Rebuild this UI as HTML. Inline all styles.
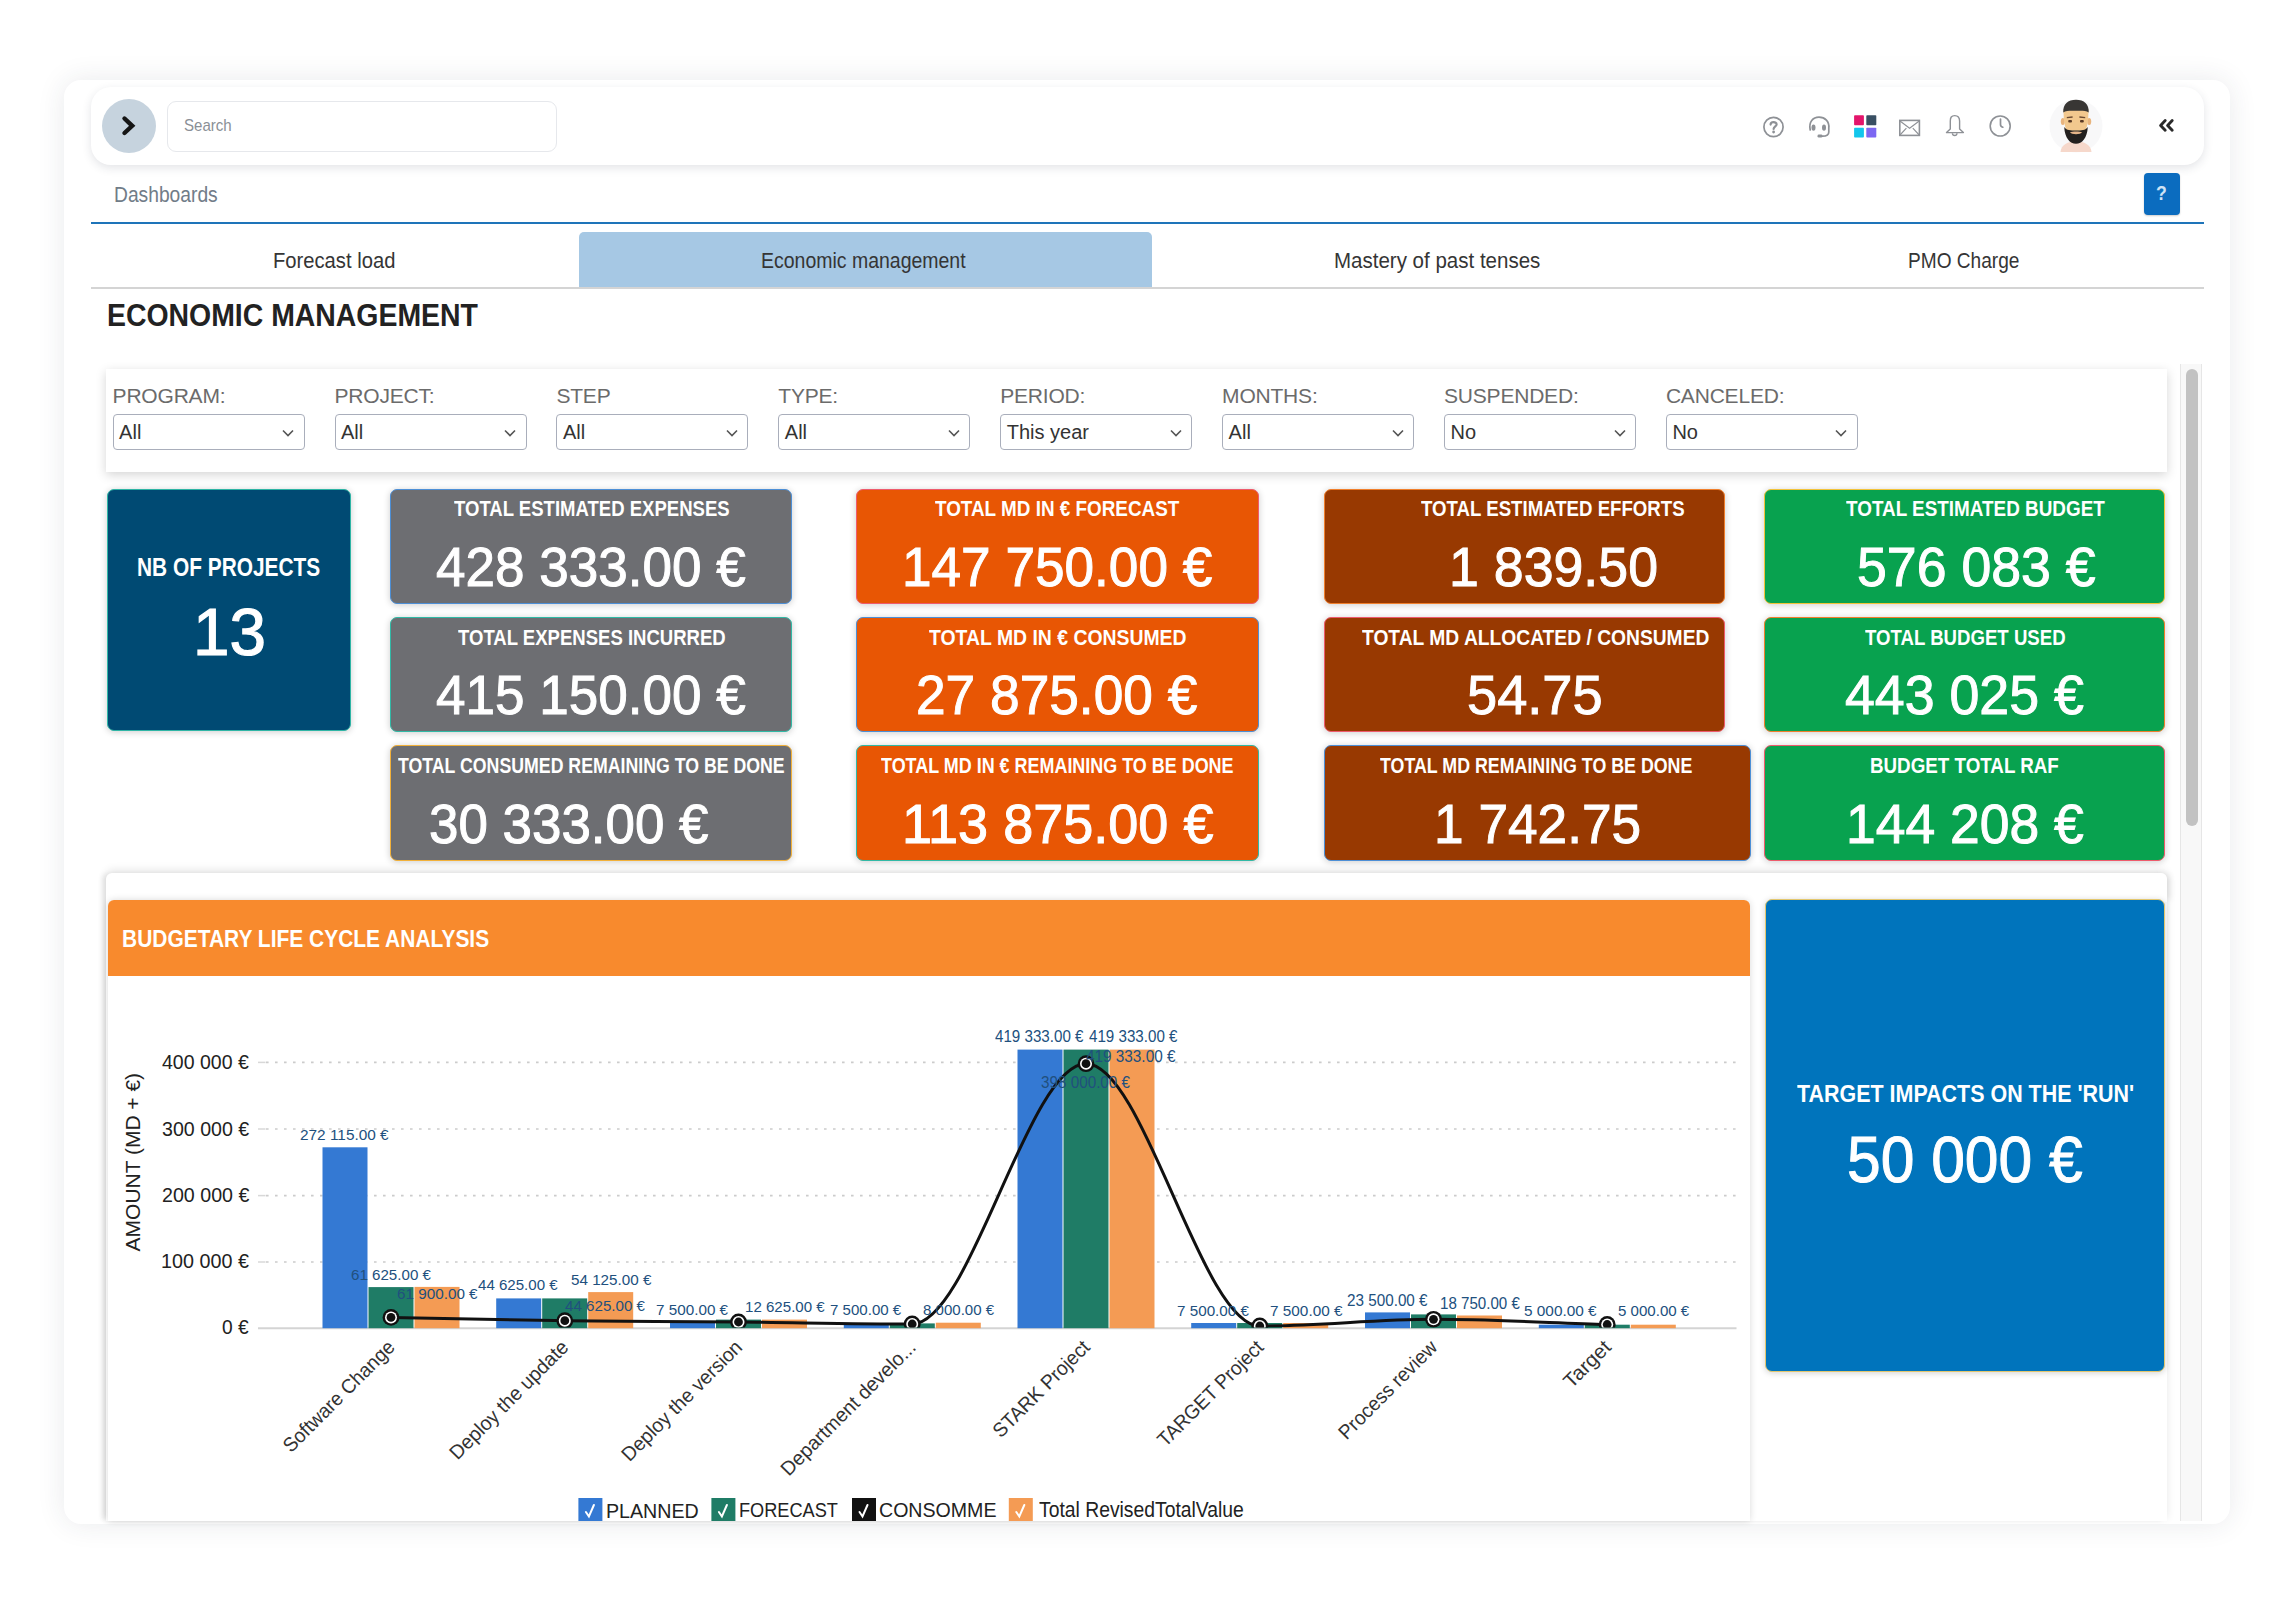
<!DOCTYPE html>
<html><head><meta charset="utf-8"><title>Economic management</title>
<style>
html,body{margin:0;padding:0;background:#fff;width:2293px;height:1604px;overflow:hidden;}
body{position:relative;font-family:"Liberation Sans",sans-serif;}
.b{position:absolute;box-sizing:border-box;}
.t{position:absolute;white-space:nowrap;transform-origin:0 0;font-family:"Liberation Sans",sans-serif;}
svg{position:absolute;overflow:visible;}
</style></head><body>
<div class="b " style="left:64.0px;top:80.0px;width:2166.0px;height:1444.0px;background:#fff;border-radius:17px;box-shadow:0 0 28px rgba(40,50,70,0.10);"></div>
<div class="b " style="left:91.0px;top:87.0px;width:2113.0px;height:78.0px;background:#fff;border-radius:20px;box-shadow:0 3px 10px rgba(40,50,70,0.13);"></div>
<div class="b " style="left:101.5px;top:99.0px;width:54.0px;height:54.0px;background:#c6d3de;border-radius:50%;"></div>
<svg style="left:118px;top:112px" width="22" height="28" viewBox="0 0 22 28"><path d="M6.5 6.5 L14.2 13.8 L6.5 21" fill="none" stroke="#151515" stroke-width="4.4" stroke-linecap="round" stroke-linejoin="miter"/></svg>
<div class="b " style="left:167.0px;top:100.5px;width:389.5px;height:51.0px;background:#fff;border:1px solid #e6e8ec;border-radius:9px;"></div>
<div class="t" style="left:184.32px;top:117.99px;font-size:16.55px;line-height:16.55px;color:#8a8f96;font-weight:normal;transform:scaleX(0.9097);">Search</div>
<svg style="left:1762px;top:115px" width="24" height="24" viewBox="0 0 24 24"><circle cx="11.5" cy="12" r="9.6" fill="none" stroke="#8e9196" stroke-width="1.7"/><path d="M8.6 9.6 C8.6 6.4 14.6 6.4 14.6 9.4 C14.6 11.2 11.6 11.6 11.6 14" fill="none" stroke="#8e9196" stroke-width="2.2" stroke-linecap="round"/><circle cx="11.6" cy="17" r="1.4" fill="#8e9196"/></svg>
<svg style="left:1807px;top:115px" width="25" height="24" viewBox="0 0 25 24"><path d="M3.2 15 C1.5 7 6 2.2 12 2.2 C18 2.2 22.5 6.5 21.8 13 L21.8 17 C21.8 20.5 19 21.2 15.5 21.2" fill="none" stroke="#8e9196" stroke-width="1.7" stroke-linecap="round"/><ellipse cx="6.5" cy="12.6" rx="2" ry="3.2" fill="#8e9196"/><ellipse cx="17" cy="12.6" rx="2" ry="3.2" fill="#8e9196"/><rect x="10.5" y="19.6" width="5" height="3" rx="1.4" fill="#8e9196"/></svg>
<svg style="left:1854px;top:115px" width="23" height="23" viewBox="0 0 23 23"><rect x="0.1" y="0.3" width="9.8" height="10" rx="0.8" fill="#e3156b"/><rect x="12.3" y="0.3" width="10" height="10" rx="0.8" fill="#394f63"/><rect x="0.1" y="12.8" width="9.8" height="9.8" rx="0.8" fill="#12c6ec"/><rect x="12.3" y="12.8" width="10" height="9.8" rx="0.8" fill="#7d67f2"/></svg>
<svg style="left:1898px;top:119px" width="23" height="18" viewBox="0 0 23 18"><rect x="1.8" y="1.4" width="19.6" height="15" fill="none" stroke="#8e9196" stroke-width="1.6"/><path d="M2 2 L11.6 9.2 L21.2 2 M2 16 L8.4 9.2 M21.2 16 L14.8 9.2" fill="none" stroke="#8e9196" stroke-width="1.1"/></svg>
<svg style="left:1944px;top:114px" width="21" height="24" viewBox="0 0 21 24"><path d="M10.7 1.6 C7.4 1.6 6.3 3.6 6.3 7 L6.3 15 L2.5 18.6 L19.4 18.6 L15.6 15 L15.6 7 C15.6 3.6 14 1.6 10.7 1.6 Z" fill="none" stroke="#8e9196" stroke-width="1.4" stroke-linejoin="round"/><path d="M8.4 19.2 C8.6 22.3 12.8 22.3 13 19.2" fill="none" stroke="#8e9196" stroke-width="1.4"/></svg>
<svg style="left:1988px;top:114px" width="24" height="24" viewBox="0 0 24 24"><circle cx="12.2" cy="12" r="10" fill="none" stroke="#8e9196" stroke-width="1.6"/><path d="M12.5 5 L12.5 10.5 Q12.5 12.6 14.8 13.2" fill="none" stroke="#8e9196" stroke-width="1.7" stroke-linecap="round"/></svg>
<svg style="left:2049px;top:98px" width="54" height="56" viewBox="0 0 54 56">
<circle cx="27" cy="28" r="26.5" fill="#f8f8f9"/>
<path d="M11.5 54 C12 46.5 19 43.5 27 43.5 C35 43.5 42 46.5 42.5 54 Z" fill="#f6d8cb"/>
<ellipse cx="13.8" cy="23.5" rx="2" ry="3.6" fill="#e8b47e"/><ellipse cx="40.2" cy="23.5" rx="2" ry="3.6" fill="#e8b47e"/>
<path d="M14.5 11.5 C14.5 30 18 39 27 39 C36 39 39.5 30 39.5 11.5 Z" fill="#f2c88e"/>
<path d="M14.3 14.5 C13.8 6 19 1.8 27 1.8 C35 1.8 40.2 6 39.7 14.5 C37 12.5 33 12.8 27 12.8 C21 12.8 17 12.5 14.3 14.5 Z" fill="#383634"/>
<path d="M15.2 29 C15.8 40 21 45.8 27 45.8 C33 45.8 38.2 40 38.8 29 C37 31.8 34 32.6 27 32.4 C20 32.6 17 31.8 15.2 29 Z" fill="#23201f"/>
<path d="M21 34.2 C23 33.2 31 33.2 33 34.2 C32 36.8 22 36.8 21 34.2 Z" fill="#e6b488"/>
<rect x="19.2" y="22" width="3.8" height="2.6" rx="1" fill="#5a3a26"/><rect x="31" y="22" width="3.8" height="2.6" rx="1" fill="#5a3a26"/>
<path d="M17.8 19.6 L23.6 19 M30.4 19 L36.2 19.6" stroke="#6b4a32" stroke-width="1.3"/>
</svg>
<svg style="left:2158px;top:119px" width="17" height="13" viewBox="0 0 17 13"><path d="M7.2 1.6 L2.6 6.4 L7.2 11.2 M14.2 1.6 L9.6 6.4 L14.2 11.2" fill="none" stroke="#2a2a2a" stroke-width="2.9" stroke-linecap="round" stroke-linejoin="round"/></svg>
<div class="t" style="left:113.96px;top:185.40px;font-size:21.38px;line-height:21.38px;color:#717c88;font-weight:normal;transform:scaleX(0.9000);">Dashboards</div>
<div class="b " style="left:2144.0px;top:173.0px;width:36.0px;height:41.5px;background:#0b6cbf;border-radius:4px;box-shadow:0 1px 2px rgba(0,0,0,.2);"></div>
<div class="t" style="left:2156.21px;top:183.07px;font-size:20.00px;line-height:20.00px;color:#cfe3f5;font-weight:bold;transform:scaleX(0.8824);">?</div>
<div class="b " style="left:91.0px;top:222.0px;width:2113.0px;height:2.0px;background:#1e74b9;"></div>
<div class="b " style="left:579.0px;top:232.0px;width:572.5px;height:55.5px;background:#a6c8e4;border-radius:5px 5px 0 0;"></div>
<div class="b " style="left:91.0px;top:287.0px;width:2113.0px;height:2.0px;background:#d4d4d4;"></div>
<div class="t" style="left:273.38px;top:249.81px;font-size:22.07px;line-height:22.07px;color:#353535;font-weight:normal;transform:scaleX(0.9154);">Forecast load</div>
<div class="t" style="left:761.44px;top:249.81px;font-size:22.07px;line-height:22.07px;color:#353535;font-weight:normal;transform:scaleX(0.8828);">Economic management</div>
<div class="t" style="left:1334.36px;top:249.81px;font-size:22.07px;line-height:22.07px;color:#353535;font-weight:normal;transform:scaleX(0.9295);">Mastery of past tenses</div>
<div class="t" style="left:1908.47px;top:249.81px;font-size:22.07px;line-height:22.07px;color:#353535;font-weight:normal;transform:scaleX(0.8650);">PMO Charge</div>
<div class="t" style="left:106.65px;top:300.43px;font-size:31.14px;line-height:31.14px;color:#222;font-weight:bold;transform:scaleX(0.9128);">ECONOMIC MANAGEMENT</div>
<div class="b " style="left:106.0px;top:369.0px;width:2060.5px;height:103.0px;background:#fff;box-shadow:0 3px 10px rgba(0,0,0,0.17);"></div>
<div class="t" style="left:112.6px;top:381px;font-size:21px;line-height:30px;color:#6b6b6b;letter-spacing:-0.2px">PROGRAM:</div>
<div class="b " style="left:112.6px;top:413.5px;width:192.0px;height:36.5px;background:#fff;border:1px solid #a9aebb;border-radius:4px;"></div>
<div class="t" style="left:119.1px;top:418px;font-size:20px;line-height:28px;color:#333">All</div>
<svg style="left:281.1px;top:428px" width="14" height="10" viewBox="0 0 14 10"><path d="M2 2.5 L7 7.5 L12 2.5" fill="none" stroke="#555" stroke-width="1.6"/></svg>
<div class="t" style="left:334.5px;top:381px;font-size:21px;line-height:30px;color:#6b6b6b;letter-spacing:-0.2px">PROJECT:</div>
<div class="b " style="left:334.5px;top:413.5px;width:192.0px;height:36.5px;background:#fff;border:1px solid #a9aebb;border-radius:4px;"></div>
<div class="t" style="left:341.0px;top:418px;font-size:20px;line-height:28px;color:#333">All</div>
<svg style="left:503.0px;top:428px" width="14" height="10" viewBox="0 0 14 10"><path d="M2 2.5 L7 7.5 L12 2.5" fill="none" stroke="#555" stroke-width="1.6"/></svg>
<div class="t" style="left:556.4px;top:381px;font-size:21px;line-height:30px;color:#6b6b6b;letter-spacing:-0.2px">STEP</div>
<div class="b " style="left:556.4px;top:413.5px;width:192.0px;height:36.5px;background:#fff;border:1px solid #a9aebb;border-radius:4px;"></div>
<div class="t" style="left:562.9px;top:418px;font-size:20px;line-height:28px;color:#333">All</div>
<svg style="left:724.9px;top:428px" width="14" height="10" viewBox="0 0 14 10"><path d="M2 2.5 L7 7.5 L12 2.5" fill="none" stroke="#555" stroke-width="1.6"/></svg>
<div class="t" style="left:778.3px;top:381px;font-size:21px;line-height:30px;color:#6b6b6b;letter-spacing:-0.2px">TYPE:</div>
<div class="b " style="left:778.3px;top:413.5px;width:192.0px;height:36.5px;background:#fff;border:1px solid #a9aebb;border-radius:4px;"></div>
<div class="t" style="left:784.8px;top:418px;font-size:20px;line-height:28px;color:#333">All</div>
<svg style="left:946.8px;top:428px" width="14" height="10" viewBox="0 0 14 10"><path d="M2 2.5 L7 7.5 L12 2.5" fill="none" stroke="#555" stroke-width="1.6"/></svg>
<div class="t" style="left:1000.2px;top:381px;font-size:21px;line-height:30px;color:#6b6b6b;letter-spacing:-0.2px">PERIOD:</div>
<div class="b " style="left:1000.2px;top:413.5px;width:192.0px;height:36.5px;background:#fff;border:1px solid #a9aebb;border-radius:4px;"></div>
<div class="t" style="left:1006.7px;top:418px;font-size:20px;line-height:28px;color:#333">This year</div>
<svg style="left:1168.7px;top:428px" width="14" height="10" viewBox="0 0 14 10"><path d="M2 2.5 L7 7.5 L12 2.5" fill="none" stroke="#555" stroke-width="1.6"/></svg>
<div class="t" style="left:1222.1px;top:381px;font-size:21px;line-height:30px;color:#6b6b6b;letter-spacing:-0.2px">MONTHS:</div>
<div class="b " style="left:1222.1px;top:413.5px;width:192.0px;height:36.5px;background:#fff;border:1px solid #a9aebb;border-radius:4px;"></div>
<div class="t" style="left:1228.6px;top:418px;font-size:20px;line-height:28px;color:#333">All</div>
<svg style="left:1390.6px;top:428px" width="14" height="10" viewBox="0 0 14 10"><path d="M2 2.5 L7 7.5 L12 2.5" fill="none" stroke="#555" stroke-width="1.6"/></svg>
<div class="t" style="left:1444.0px;top:381px;font-size:21px;line-height:30px;color:#6b6b6b;letter-spacing:-0.2px">SUSPENDED:</div>
<div class="b " style="left:1444.0px;top:413.5px;width:192.0px;height:36.5px;background:#fff;border:1px solid #a9aebb;border-radius:4px;"></div>
<div class="t" style="left:1450.5px;top:418px;font-size:20px;line-height:28px;color:#333">No</div>
<svg style="left:1612.5px;top:428px" width="14" height="10" viewBox="0 0 14 10"><path d="M2 2.5 L7 7.5 L12 2.5" fill="none" stroke="#555" stroke-width="1.6"/></svg>
<div class="t" style="left:1665.9px;top:381px;font-size:21px;line-height:30px;color:#6b6b6b;letter-spacing:-0.2px">CANCELED:</div>
<div class="b " style="left:1665.9px;top:413.5px;width:192.0px;height:36.5px;background:#fff;border:1px solid #a9aebb;border-radius:4px;"></div>
<div class="t" style="left:1672.4px;top:418px;font-size:20px;line-height:28px;color:#333">No</div>
<svg style="left:1834.4px;top:428px" width="14" height="10" viewBox="0 0 14 10"><path d="M2 2.5 L7 7.5 L12 2.5" fill="none" stroke="#555" stroke-width="1.6"/></svg>
<div class="b " style="left:2180.0px;top:364.0px;width:22.0px;height:1157.0px;background:#f8f8f8;border-left:1px solid #e6e6e6;border-right:1px solid #e6e6e6;"></div>
<div class="b " style="left:2186.0px;top:369.0px;width:12.0px;height:457.0px;background:#c2c2c2;border-radius:6px;"></div>
<div class="b " style="left:106.6px;top:488.8px;width:244.8px;height:242.7px;background:#004a73;border:1.6px solid #2fb5a5;border-radius:7px;box-shadow:0 1px 7px rgba(0,0,0,0.20);"></div>
<div class="t" style="left:137.04px;top:554.71px;font-size:25.14px;line-height:25.14px;color:#fff;font-weight:bold;transform:scaleX(0.8308);">NB OF PROJECTS</div>
<div class="t" style="left:192.78px;top:599.23px;font-size:66.57px;line-height:66.57px;color:#fff;font-weight:normal;transform:scaleX(0.9858);-webkit-text-stroke:1.2px #fff;">13</div>
<div class="b " style="left:390.0px;top:488.5px;width:402.0px;height:115.3px;background:#6d6e72;border:1.6px solid #4d8fd6;border-radius:7px;box-shadow:0 1px 7px rgba(0,0,0,0.20);"></div>
<div class="b " style="left:390.0px;top:617.0px;width:402.0px;height:115.0px;background:#6d6e72;border:1.6px solid #31b9a6;border-radius:7px;box-shadow:0 1px 7px rgba(0,0,0,0.20);"></div>
<div class="b " style="left:390.0px;top:745.0px;width:402.0px;height:115.5px;background:#6d6e72;border:1.6px solid #f2b13a;border-radius:7px;box-shadow:0 1px 7px rgba(0,0,0,0.20);"></div>
<div class="b " style="left:856.4px;top:488.5px;width:402.6px;height:115.3px;background:#e85604;border:1.6px solid #ee5b6c;border-radius:7px;box-shadow:0 1px 7px rgba(0,0,0,0.20);"></div>
<div class="b " style="left:856.4px;top:617.0px;width:402.6px;height:115.0px;background:#e85604;border:1.6px solid #4d8fd6;border-radius:7px;box-shadow:0 1px 7px rgba(0,0,0,0.20);"></div>
<div class="b " style="left:856.4px;top:745.0px;width:402.6px;height:115.5px;background:#e85604;border:1.6px solid #31b9a6;border-radius:7px;box-shadow:0 1px 7px rgba(0,0,0,0.20);"></div>
<div class="b " style="left:1323.8px;top:488.5px;width:401.0px;height:115.3px;background:#983901;border:1.6px solid #f07f2c;border-radius:7px;box-shadow:0 1px 7px rgba(0,0,0,0.20);"></div>
<div class="b " style="left:1323.8px;top:617.0px;width:401.0px;height:115.0px;background:#983901;border:1.6px solid #ee5b6c;border-radius:7px;box-shadow:0 1px 7px rgba(0,0,0,0.20);"></div>
<div class="b " style="left:1323.8px;top:745.0px;width:427.2px;height:115.5px;background:#983901;border:1.6px solid #4d8fd6;border-radius:7px;box-shadow:0 1px 7px rgba(0,0,0,0.20);"></div>
<div class="b " style="left:1764.0px;top:488.5px;width:401.0px;height:115.3px;background:#08a24f;border:1.6px solid #f2c33a;border-radius:7px;box-shadow:0 1px 7px rgba(0,0,0,0.20);"></div>
<div class="b " style="left:1764.0px;top:617.0px;width:401.0px;height:115.0px;background:#08a24f;border:1.6px solid #f07f2c;border-radius:7px;box-shadow:0 1px 7px rgba(0,0,0,0.20);"></div>
<div class="b " style="left:1764.0px;top:745.0px;width:401.0px;height:115.5px;background:#08a24f;border:1.6px solid #ee5b6c;border-radius:7px;box-shadow:0 1px 7px rgba(0,0,0,0.20);"></div>
<div class="t" style="left:453.61px;top:498.31px;font-size:22.43px;line-height:22.43px;color:#fff;font-weight:bold;transform:scaleX(0.8265);">TOTAL ESTIMATED EXPENSES</div>
<div class="t" style="left:435.94px;top:539.93px;font-size:55.59px;line-height:55.59px;color:#fff;font-weight:normal;transform:scaleX(0.9545);-webkit-text-stroke:1px #fff;">428 333.00 €</div>
<div class="t" style="left:457.81px;top:626.81px;font-size:22.43px;line-height:22.43px;color:#fff;font-weight:bold;transform:scaleX(0.8264);">TOTAL EXPENSES INCURRED</div>
<div class="t" style="left:435.94px;top:668.43px;font-size:55.59px;line-height:55.59px;color:#fff;font-weight:normal;transform:scaleX(0.9545);-webkit-text-stroke:1px #fff;">415 150.00 €</div>
<div class="t" style="left:397.82px;top:755.31px;font-size:22.43px;line-height:22.43px;color:#fff;font-weight:bold;transform:scaleX(0.7905);">TOTAL CONSUMED REMAINING TO BE DONE</div>
<div class="t" style="left:428.88px;top:796.93px;font-size:55.59px;line-height:55.59px;color:#fff;font-weight:normal;transform:scaleX(0.9520);-webkit-text-stroke:1px #fff;">30 333.00 €</div>
<div class="t" style="left:935.31px;top:498.31px;font-size:22.43px;line-height:22.43px;color:#fff;font-weight:bold;transform:scaleX(0.8417);">TOTAL MD IN € FORECAST</div>
<div class="t" style="left:902.41px;top:539.93px;font-size:55.59px;line-height:55.59px;color:#fff;font-weight:normal;transform:scaleX(0.9561);-webkit-text-stroke:1px #fff;">147 750.00 €</div>
<div class="t" style="left:928.81px;top:626.81px;font-size:22.43px;line-height:22.43px;color:#fff;font-weight:bold;transform:scaleX(0.8651);">TOTAL MD IN € CONSUMED</div>
<div class="t" style="left:916.34px;top:668.43px;font-size:55.59px;line-height:55.59px;color:#fff;font-weight:normal;transform:scaleX(0.9580);-webkit-text-stroke:1px #fff;">27 875.00 €</div>
<div class="t" style="left:880.82px;top:755.31px;font-size:22.43px;line-height:22.43px;color:#fff;font-weight:bold;transform:scaleX(0.8001);">TOTAL MD IN € REMAINING TO BE DONE</div>
<div class="t" style="left:901.55px;top:796.93px;font-size:55.59px;line-height:55.59px;color:#fff;font-weight:normal;transform:scaleX(0.9722);-webkit-text-stroke:1px #fff;">113 875.00 €</div>
<div class="t" style="left:1420.81px;top:498.31px;font-size:22.43px;line-height:22.43px;color:#fff;font-weight:bold;transform:scaleX(0.8310);">TOTAL ESTIMATED EFFORTS</div>
<div class="t" style="left:1448.97px;top:539.93px;font-size:55.59px;line-height:55.59px;color:#fff;font-weight:normal;transform:scaleX(0.9661);-webkit-text-stroke:1px #fff;">1 839.50</div>
<div class="t" style="left:1361.81px;top:627.46px;font-size:21.66px;line-height:21.66px;color:#fff;font-weight:bold;transform:scaleX(0.8884);">TOTAL MD ALLOCATED / CONSUMED</div>
<div class="t" style="left:1467.23px;top:668.43px;font-size:55.59px;line-height:55.59px;color:#fff;font-weight:normal;transform:scaleX(0.9753);-webkit-text-stroke:1px #fff;">54.75</div>
<div class="t" style="left:1380.22px;top:755.31px;font-size:22.43px;line-height:22.43px;color:#fff;font-weight:bold;transform:scaleX(0.7943);">TOTAL MD REMAINING TO BE DONE</div>
<div class="t" style="left:1433.81px;top:796.93px;font-size:55.59px;line-height:55.59px;color:#fff;font-weight:normal;transform:scaleX(0.9574);-webkit-text-stroke:1px #fff;">1 742.75</div>
<div class="t" style="left:1845.81px;top:498.31px;font-size:22.43px;line-height:22.43px;color:#fff;font-weight:bold;transform:scaleX(0.8422);">TOTAL ESTIMATED BUDGET</div>
<div class="t" style="left:1856.85px;top:539.93px;font-size:55.59px;line-height:55.59px;color:#fff;font-weight:normal;transform:scaleX(0.9652);-webkit-text-stroke:1px #fff;">576 083 €</div>
<div class="t" style="left:1864.81px;top:626.81px;font-size:22.43px;line-height:22.43px;color:#fff;font-weight:bold;transform:scaleX(0.8302);">TOTAL BUDGET USED</div>
<div class="t" style="left:1844.93px;top:668.43px;font-size:55.59px;line-height:55.59px;color:#fff;font-weight:normal;transform:scaleX(0.9657);-webkit-text-stroke:1px #fff;">443 025 €</div>
<div class="t" style="left:1869.78px;top:755.31px;font-size:22.43px;line-height:22.43px;color:#fff;font-weight:bold;transform:scaleX(0.8375);">BUDGET TOTAL RAF</div>
<div class="t" style="left:1845.99px;top:796.93px;font-size:55.59px;line-height:55.59px;color:#fff;font-weight:normal;transform:scaleX(0.9614);-webkit-text-stroke:1px #fff;">144 208 €</div>
<div class="b " style="left:106.0px;top:873.0px;width:2060.5px;height:648.0px;background:#fff;box-shadow:-5px 0 5px -1px rgba(0,0,0,0.08), 0 -3px 8px rgba(0,0,0,0.10);border-radius:6px 6px 0 0;"></div>
<div class="b " style="left:2150.0px;top:873.0px;width:16.5px;height:29.0px;background:#fff;box-shadow:5px 0 6px -2px rgba(0,0,0,0.10);border-radius:0 6px 0 0;"></div>
<div class="b " style="left:107.5px;top:900.0px;width:1642.5px;height:621.0px;background:#fff;box-shadow:0 0 7px rgba(0,0,0,0.15);border-radius:6px 6px 0 0;"></div>
<div class="b " style="left:107.5px;top:900.0px;width:1642.5px;height:75.7px;background:#f88a2d;border-radius:6px 6px 0 0;"></div>
<div class="t" style="left:121.64px;top:927.10px;font-size:23.86px;line-height:23.86px;color:#fff;font-weight:bold;transform:scaleX(0.8783);">BUDGETARY LIFE CYCLE ANALYSIS</div>
<div class="b " style="left:1764.6px;top:898.6px;width:400.4px;height:473.7px;background:#0074bc;border:1.5px solid #e3c76e;border-radius:7px;box-shadow:0 1px 6px rgba(0,0,0,0.18);"></div>
<div class="t" style="left:1796.79px;top:1081.98px;font-size:24.00px;line-height:24.00px;color:#fff;font-weight:bold;transform:scaleX(0.8938);">TARGET IMPACTS ON THE &#x27;RUN&#x27;</div>
<div class="t" style="left:1846.98px;top:1126.96px;font-size:65.47px;line-height:65.47px;color:#fff;font-weight:normal;transform:scaleX(0.9248);-webkit-text-stroke:1px #fff;">50 000 €</div>
<div class="t" style="left:162.21px;top:1052.02px;font-size:20.06px;line-height:20.06px;color:#222;font-weight:normal;transform:scaleX(0.9734);">400 000 €</div>
<div class="t" style="left:161.82px;top:1118.82px;font-size:20.06px;line-height:20.06px;color:#222;font-weight:normal;transform:scaleX(0.9779);">300 000 €</div>
<div class="t" style="left:161.62px;top:1184.80px;font-size:20.20px;line-height:20.20px;color:#222;font-weight:normal;transform:scaleX(0.9731);">200 000 €</div>
<div class="t" style="left:161.12px;top:1251.32px;font-size:20.06px;line-height:20.06px;color:#222;font-weight:normal;transform:scaleX(0.9857);">100 000 €</div>
<div class="t" style="left:222.43px;top:1317.82px;font-size:19.34px;line-height:19.34px;color:#222;font-weight:normal;transform:scaleX(0.9915);">0 €</div>
<svg style="left:0;top:0" width="2293" height="1604" viewBox="0 0 2293 1604">
<line x1="266" y1="1062.4" x2="1736" y2="1062.4" stroke="#cccccc" stroke-width="1.6" stroke-dasharray="2.6 6.4"/>
<line x1="258" y1="1062.4" x2="265.5" y2="1062.4" stroke="#d8d8d8" stroke-width="1.5"/>
<line x1="266" y1="1129.0" x2="1736" y2="1129.0" stroke="#cccccc" stroke-width="1.6" stroke-dasharray="2.6 6.4"/>
<line x1="258" y1="1129.0" x2="265.5" y2="1129.0" stroke="#d8d8d8" stroke-width="1.5"/>
<line x1="266" y1="1195.6" x2="1736" y2="1195.6" stroke="#cccccc" stroke-width="1.6" stroke-dasharray="2.6 6.4"/>
<line x1="258" y1="1195.6" x2="265.5" y2="1195.6" stroke="#d8d8d8" stroke-width="1.5"/>
<line x1="266" y1="1262.0" x2="1736" y2="1262.0" stroke="#cccccc" stroke-width="1.6" stroke-dasharray="2.6 6.4"/>
<line x1="258" y1="1262.0" x2="265.5" y2="1262.0" stroke="#d8d8d8" stroke-width="1.5"/>
<line x1="258" y1="1328.2" x2="1736.5" y2="1328.2" stroke="#d4d4d4" stroke-width="2"/>
<text x="0" y="0" transform="translate(140.3 1251.4) rotate(-90)" font-family="Liberation Sans" font-size="20.5" fill="#222" textLength="178.5" lengthAdjust="spacingAndGlyphs">AMOUNT (MD + €)</text>
<rect x="322.5" y="1147.3" width="45" height="180.9" fill="#3479d3"/>
<rect x="368.5" y="1287.1" width="45" height="41.1" fill="#1f7c66"/>
<rect x="414.5" y="1286.9" width="45" height="41.3" fill="#f49b54"/>
<rect x="496.2" y="1298.4" width="45" height="29.8" fill="#3479d3"/>
<rect x="542.2" y="1298.4" width="45" height="29.8" fill="#1f7c66"/>
<rect x="588.2" y="1292.1" width="45" height="36.1" fill="#f49b54"/>
<rect x="670.0" y="1323.0" width="45" height="5.2" fill="#3479d3"/>
<rect x="716.0" y="1319.6" width="45" height="8.6" fill="#1f7c66"/>
<rect x="762.0" y="1319.6" width="45" height="8.6" fill="#f49b54"/>
<rect x="843.8" y="1323.0" width="45" height="5.2" fill="#3479d3"/>
<rect x="889.8" y="1323.4" width="45" height="4.8" fill="#1f7c66"/>
<rect x="935.8" y="1322.7" width="45" height="5.5" fill="#f49b54"/>
<rect x="1017.5" y="1049.6" width="45" height="278.6" fill="#3479d3"/>
<rect x="1063.5" y="1049.6" width="45" height="278.6" fill="#1f7c66"/>
<rect x="1109.5" y="1049.6" width="45" height="278.6" fill="#f49b54"/>
<rect x="1191.2" y="1323.0" width="45" height="5.2" fill="#3479d3"/>
<rect x="1237.2" y="1323.0" width="45" height="5.2" fill="#1f7c66"/>
<rect x="1283.2" y="1323.0" width="45" height="5.2" fill="#f49b54"/>
<rect x="1365.0" y="1312.4" width="45" height="15.8" fill="#3479d3"/>
<rect x="1411.0" y="1314.4" width="45" height="13.8" fill="#1f7c66"/>
<rect x="1457.0" y="1315.5" width="45" height="12.7" fill="#f49b54"/>
<rect x="1538.8" y="1324.7" width="45" height="3.5" fill="#3479d3"/>
<rect x="1584.8" y="1324.7" width="45" height="3.5" fill="#1f7c66"/>
<rect x="1630.8" y="1324.7" width="45" height="3.5" fill="#f49b54"/>
<defs><clipPath id="ca"><rect x="258" y="980" width="1480" height="347.5"/></clipPath></defs><g clip-path="url(#ca)">
<path d="M391.00 1317.38 C448.92 1318.48 506.83 1319.92 564.75 1320.70 C622.67 1321.47 680.58 1321.47 738.50 1322.02 C796.42 1322.58 854.33 1324.02 912.25 1324.02 C970.17 1324.02 1028.08 1063.73 1086.00 1063.73 C1143.92 1063.73 1201.83 1326.01 1259.75 1326.01 C1317.67 1326.01 1375.58 1319.30 1433.50 1319.30 C1491.42 1319.30 1549.33 1322.80 1607.25 1324.55" fill="none" stroke="#111" stroke-width="3"/>
<circle cx="391.0" cy="1317.4" r="8.4" fill="#111"/><circle cx="391.0" cy="1317.4" r="6" fill="#fff"/><circle cx="391.0" cy="1317.4" r="4.4" fill="#111"/>
<circle cx="564.8" cy="1320.7" r="8.4" fill="#111"/><circle cx="564.8" cy="1320.7" r="6" fill="#fff"/><circle cx="564.8" cy="1320.7" r="4.4" fill="#111"/>
<circle cx="738.5" cy="1322.0" r="8.4" fill="#111"/><circle cx="738.5" cy="1322.0" r="6" fill="#fff"/><circle cx="738.5" cy="1322.0" r="4.4" fill="#111"/>
<circle cx="912.2" cy="1324.0" r="8.4" fill="#111"/><circle cx="912.2" cy="1324.0" r="6" fill="#fff"/><circle cx="912.2" cy="1324.0" r="4.4" fill="#111"/>
<circle cx="1086.0" cy="1063.7" r="8.4" fill="#111"/><circle cx="1086.0" cy="1063.7" r="6" fill="#fff"/><circle cx="1086.0" cy="1063.7" r="4.4" fill="#111"/>
<circle cx="1259.8" cy="1326.0" r="8.4" fill="#111"/><circle cx="1259.8" cy="1326.0" r="6" fill="#fff"/><circle cx="1259.8" cy="1326.0" r="4.4" fill="#111"/>
<circle cx="1433.5" cy="1319.3" r="8.4" fill="#111"/><circle cx="1433.5" cy="1319.3" r="6" fill="#fff"/><circle cx="1433.5" cy="1319.3" r="4.4" fill="#111"/>
<circle cx="1607.2" cy="1324.5" r="8.4" fill="#111"/><circle cx="1607.2" cy="1324.5" r="6" fill="#fff"/><circle cx="1607.2" cy="1324.5" r="4.4" fill="#111"/>
</g>
<text x="0" y="0" transform="translate(396.0 1348.5) rotate(-45)" text-anchor="end" font-family="Liberation Sans" font-size="20" fill="#333" textLength="148.5" lengthAdjust="spacingAndGlyphs">Software Change</text>
<text x="0" y="0" transform="translate(569.8 1348.5) rotate(-45)" text-anchor="end" font-family="Liberation Sans" font-size="20" fill="#333" textLength="158.8" lengthAdjust="spacingAndGlyphs">Deploy the update</text>
<text x="0" y="0" transform="translate(743.5 1348.5) rotate(-45)" text-anchor="end" font-family="Liberation Sans" font-size="20" fill="#333" textLength="161.2" lengthAdjust="spacingAndGlyphs">Deploy the version</text>
<text x="0" y="0" transform="translate(917.2 1348.5) rotate(-45)" text-anchor="end" font-family="Liberation Sans" font-size="20" fill="#333" textLength="181.6" lengthAdjust="spacingAndGlyphs">Department develo...</text>
<text x="0" y="0" transform="translate(1091.0 1348.5) rotate(-45)" text-anchor="end" font-family="Liberation Sans" font-size="20" fill="#333" textLength="127.8" lengthAdjust="spacingAndGlyphs">STARK Project</text>
<text x="0" y="0" transform="translate(1264.8 1348.5) rotate(-45)" text-anchor="end" font-family="Liberation Sans" font-size="20" fill="#333" textLength="140.3" lengthAdjust="spacingAndGlyphs">TARGET Project</text>
<text x="0" y="0" transform="translate(1438.5 1348.5) rotate(-45)" text-anchor="end" font-family="Liberation Sans" font-size="20" fill="#333" textLength="130.0" lengthAdjust="spacingAndGlyphs">Process review</text>
<text x="0" y="0" transform="translate(1612.2 1348.5) rotate(-45)" text-anchor="end" font-family="Liberation Sans" font-size="20" fill="#333" textLength="57.5" lengthAdjust="spacingAndGlyphs">Target</text>
<rect x="578.4" y="1498" width="24" height="23" fill="#3479d3"/>
<path d="M585.9 1512 L588.9 1516.5 L593.9 1505" fill="none" stroke="#fff" stroke-width="2" stroke-linecap="round"/>
<rect x="711.4" y="1498" width="24" height="23" fill="#1f7c66"/>
<path d="M718.9 1512 L721.9 1516.5 L726.9 1505" fill="none" stroke="#fff" stroke-width="2" stroke-linecap="round"/>
<rect x="852.0" y="1498" width="24" height="23" fill="#111"/>
<path d="M859.5 1512 L862.5 1516.5 L867.5 1505" fill="none" stroke="#fff" stroke-width="2" stroke-linecap="round"/>
<rect x="1008.8" y="1498" width="24" height="23" fill="#f49b54"/>
<path d="M1016.3 1512 L1019.3 1516.5 L1024.3 1505" fill="none" stroke="#fff" stroke-width="2" stroke-linecap="round"/>
</svg>
<div class="t" style="left:299.83px;top:1126.70px;font-size:15.47px;line-height:15.47px;color:#21507e;font-weight:normal;transform:scaleX(0.9944);">272 115.00 €</div>
<div class="t" style="left:350.84px;top:1268.13px;font-size:14.61px;line-height:14.61px;color:#21507e;font-weight:normal;transform:scaleX(1.0353);">61 625.00 €</div>
<div class="t" style="left:396.84px;top:1287.18px;font-size:14.90px;line-height:14.90px;color:#21507e;font-weight:normal;transform:scaleX(1.0244);">61 900.00 €</div>
<div class="t" style="left:478.30px;top:1278.33px;font-size:14.61px;line-height:14.61px;color:#21507e;font-weight:normal;transform:scaleX(1.0320);">44 625.00 €</div>
<div class="t" style="left:571.19px;top:1272.04px;font-size:15.19px;line-height:15.19px;color:#21507e;font-weight:normal;transform:scaleX(1.0019);">54 125.00 €</div>
<div class="t" style="left:564.70px;top:1297.54px;font-size:15.19px;line-height:15.19px;color:#21507e;font-weight:normal;transform:scaleX(0.9968);">44 625.00 €</div>
<div class="t" style="left:656.14px;top:1301.92px;font-size:15.33px;line-height:15.33px;color:#21507e;font-weight:normal;transform:scaleX(0.9953);">7 500.00 €</div>
<div class="t" style="left:745.37px;top:1299.20px;font-size:15.47px;line-height:15.47px;color:#21507e;font-weight:normal;transform:scaleX(0.9750);">12 625.00 €</div>
<div class="t" style="left:830.45px;top:1301.92px;font-size:15.33px;line-height:15.33px;color:#21507e;font-weight:normal;transform:scaleX(0.9827);">7 500.00 €</div>
<div class="t" style="left:923.32px;top:1301.92px;font-size:15.33px;line-height:15.33px;color:#21507e;font-weight:normal;transform:scaleX(0.9817);">8 000.00 €</div>
<div class="t" style="left:994.70px;top:1028.31px;font-size:16.05px;line-height:16.05px;color:#21507e;font-weight:normal;transform:scaleX(0.9448);">419 333.00 €</div>
<div class="t" style="left:1088.70px;top:1028.31px;font-size:16.05px;line-height:16.05px;color:#21507e;font-weight:normal;transform:scaleX(0.9448);">419 333.00 €</div>
<div class="t" style="left:1085.69px;top:1048.21px;font-size:16.05px;line-height:16.05px;color:#21507e;font-weight:normal;transform:scaleX(0.9555);">419 333.00 €</div>
<div class="t" style="left:1041.39px;top:1074.41px;font-size:16.05px;line-height:16.05px;color:#21507e;font-weight:normal;transform:scaleX(0.9513);">398 000.00 €</div>
<div class="t" style="left:1177.24px;top:1302.70px;font-size:15.47px;line-height:15.47px;color:#21507e;font-weight:normal;transform:scaleX(0.9847);">7 500.00 €</div>
<div class="t" style="left:1269.73px;top:1302.70px;font-size:15.47px;line-height:15.47px;color:#21507e;font-weight:normal;transform:scaleX(0.9916);">7 500.00 €</div>
<div class="t" style="left:1346.54px;top:1292.41px;font-size:16.05px;line-height:16.05px;color:#21507e;font-weight:normal;transform:scaleX(0.9513);">23 500.00 €</div>
<div class="t" style="left:1440.37px;top:1294.85px;font-size:16.48px;line-height:16.48px;color:#21507e;font-weight:normal;transform:scaleX(0.9180);">18 750.00 €</div>
<div class="t" style="left:1524.39px;top:1302.70px;font-size:15.47px;line-height:15.47px;color:#21507e;font-weight:normal;transform:scaleX(0.9937);">5 000.00 €</div>
<div class="t" style="left:1618.20px;top:1302.70px;font-size:15.47px;line-height:15.47px;color:#21507e;font-weight:normal;transform:scaleX(0.9743);">5 000.00 €</div>
<div class="t" style="left:606.03px;top:1499.71px;font-size:21.01px;line-height:21.01px;color:#222;font-weight:normal;transform:scaleX(0.9352);">PLANNED</div>
<div class="t" style="left:738.55px;top:1499.96px;font-size:20.71px;line-height:20.71px;color:#222;font-weight:normal;transform:scaleX(0.8779);">FORECAST</div>
<div class="t" style="left:879.02px;top:1499.96px;font-size:20.71px;line-height:20.71px;color:#222;font-weight:normal;transform:scaleX(0.9459);">CONSOMME</div>
<div class="t" style="left:1038.51px;top:1498.81px;font-size:22.07px;line-height:22.07px;color:#222;font-weight:normal;transform:scaleX(0.8761);">Total RevisedTotalValue</div></body></html>
